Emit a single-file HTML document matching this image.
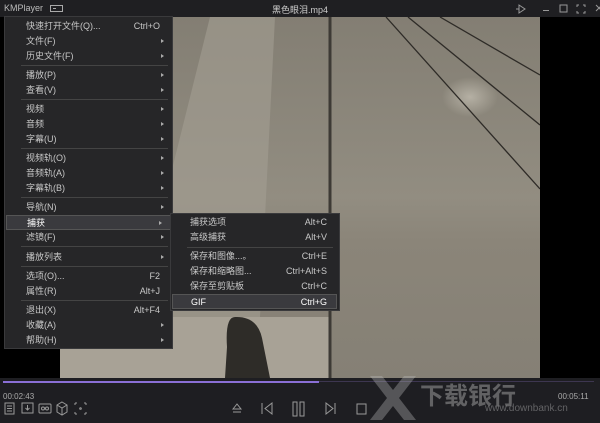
<!DOCTYPE html>
<html><head><meta charset="utf-8"><style>
*{margin:0;padding:0;box-sizing:border-box}
body{width:600px;height:423px;background:#000;position:relative;overflow:hidden;font-family:"Liberation Sans","Noto Sans CJK SC",sans-serif;font-size:9px;color:#c8c8c8}
.title{position:absolute;left:0;top:0;width:600px;height:17px;background:#1f1f22}
.bot{position:absolute;left:0;top:378px;width:600px;height:45px;background:#1e1e22}
.menu{position:absolute;background:#262628;border:1px solid #3a3a3c}
.it{position:absolute;left:0;right:0;height:15px;line-height:15px;padding-left:21px}
.it .k{position:absolute;right:12px;top:0}
.it .a{position:absolute;right:8px;top:5px;width:0;height:0;border-left:3px solid #aaa;border-top:2.5px solid transparent;border-bottom:2.5px solid transparent}
.sep{position:absolute;left:16px;right:4px;height:1px;background:#444}
.hl{background:#3a3a3e;border:1px solid #555;color:#fff}
</style></head><body>
<div class="title">
<div style="position:absolute;left:4px;top:3px;font-size:9px;color:#bbb">KMPlayer</div>
<div style="position:absolute;left:50px;top:5px;width:13px;height:7px;border:1px solid #aaa"><div style="position:absolute;left:2px;top:2px;width:3px;height:1px;background:#aaa"></div></div>
<div style="position:absolute;left:272px;top:3px;color:#ccc">黑色眼泪.mp4</div>
<svg style="position:absolute;left:510px;top:2px" width="90" height="14" stroke="#999" fill="none" stroke-width="1">
<path d="M6 7h3M9 3v8l6-4z"/><path d="M33 8.5h6"/><rect x="50" y="3" width="7" height="7"/><path d="M69 3h-2v2M73 3h2v2M69 11h-2v-2M73 11h2v-2"/><path d="M86 3l6 6M92 3l-6 6"/>
</svg>
</div>
<svg style="position:absolute;left:60px;top:17px" width="480" height="361">
<defs><linearGradient id="g" x1="0" y1="0" x2="0" y2="1"><stop offset="0" stop-color="#837e73"/><stop offset="0.5" stop-color="#928d81"/><stop offset="0.62" stop-color="#8b8579"/><stop offset="1" stop-color="#858075"/></linearGradient>
<radialGradient id="c"><stop offset="0" stop-color="#b5b0a4"/><stop offset="1" stop-color="#b5b0a4" stop-opacity="0"/></radialGradient></defs>
<rect width="480" height="361" fill="url(#g)"/>
<path d="M150 0h65l-15 300l-100 61h-40z" fill="#a39e92" opacity="0.6"/>
<rect x="0" y="300" width="270" height="61" fill="#a8a296"/>
<ellipse cx="410" cy="80" rx="28" ry="20" fill="url(#c)"/>
<rect x="268.5" y="0" width="3" height="361" fill="#3d3a35"/>
<path d="M326 0L480 172M348 0L480 108M380 0L480 58" stroke="#2e2b27" stroke-width="1.3"/>
<path d="M175 300 q-10 0 -8 30 l-2 31h45l-8-40q-5-22-27-21z" fill="#2e2c28"/>
</svg>
<div class="bot">
<div style="position:absolute;left:3px;top:3px;width:316px;height:2px;background:#8a6fd6"></div>
<div style="position:absolute;left:319px;top:3px;width:275px;height:1px;background:#3d3650"></div>
<div style="position:absolute;left:3px;top:14px;font-size:8px;color:#aaa">00:02:43</div>
<div style="position:absolute;left:558px;top:14px;font-size:8px;color:#aaa">00:05:11</div>
<svg style="position:absolute;left:0;top:20px" width="600" height="25" stroke="#999" fill="none" stroke-width="1">
<rect x="5" y="5" width="9" height="11"/><path d="M7 8h5M7 10.5h5M7 13h5"/>
<rect x="22" y="5" width="11" height="10"/><path d="M27.5 7v5M25.5 10l2 2 2-2"/>
<rect x="39" y="6" width="12" height="9" rx="1"/><circle cx="43" cy="10.5" r="1.5"/><circle cx="47" cy="10.5" r="1.5"/>
<path d="M62 4l5 3v7l-5 3-5-3v-7zM57 7l5 3 5-3M62 10v7"/>
<path d="M75 5h2M75 5v2M84 5h2M86 5v2M75 16h2M75 14v2M84 16h2M86 14v2"/><circle cx="80.5" cy="10.5" r="0.8"/>
<path d="M233 11l4-5 4 5zM233 14h8"/>
<path d="M262 5v11M272 5l-7 5.5 7 5.5z"/>
<rect x="293" y="4" width="4" height="14"/><rect x="300" y="4" width="4" height="14"/>
<path d="M326 5l7 5.5-7 5.5zM335 5v11"/>
<rect x="357" y="6" width="9" height="10"/>
</svg>
<div style="position:absolute;left:420px;top:-2px;font-size:24px;font-weight:bold;color:rgba(200,200,200,0.4)">下载银行</div>
<div style="position:absolute;left:485px;top:25px;font-size:10px;color:rgba(200,200,200,0.4)">www.downbank.cn</div>
<svg style="position:absolute;left:368px;top:-4px" width="50" height="47"><path d="M2 2h12l11 14 11-14h12l-17 22 17 22h-12l-11-14-11 14h-12l17-22z" fill="rgba(190,190,190,0.35)"/></svg>
</div>

<div class="menu" style="left:4px;top:16px;width:169px;height:333px">
<div class="it" style="top:2px">快速打开文件(Q)...<span class="k">Ctrl+O</span></div>
<div class="it" style="top:17px">文件(F)<span class="a"></span></div>
<div class="it" style="top:32px">历史文件(F)<span class="a"></span></div>
<div class="sep" style="top:48px"></div>
<div class="it" style="top:51px">播放(P)<span class="a"></span></div>
<div class="it" style="top:66px">查看(V)<span class="a"></span></div>
<div class="sep" style="top:82px"></div>
<div class="it" style="top:85px">视频<span class="a"></span></div>
<div class="it" style="top:100px">音频<span class="a"></span></div>
<div class="it" style="top:115px">字幕(U)<span class="a"></span></div>
<div class="sep" style="top:131px"></div>
<div class="it" style="top:134px">视频轨(O)<span class="a"></span></div>
<div class="it" style="top:149px">音频轨(A)<span class="a"></span></div>
<div class="it" style="top:164px">字幕轨(B)<span class="a"></span></div>
<div class="sep" style="top:180px"></div>
<div class="it" style="top:183px">导航(N)<span class="a"></span></div>
<div class="it hl" style="top:198px;left:1px;right:1px;padding-left:20px">捕获<span class="a"></span></div>
<div class="it" style="top:213px">滤镜(F)<span class="a"></span></div>
<div class="sep" style="top:229px"></div>
<div class="it" style="top:233px">播放列表<span class="a"></span></div>
<div class="sep" style="top:249px"></div>
<div class="it" style="top:252px">选项(O)...<span class="k">F2</span></div>
<div class="it" style="top:267px">属性(R)<span class="k">Alt+J</span></div>
<div class="sep" style="top:283px"></div>
<div class="it" style="top:286px">退出(X)<span class="k">Alt+F4</span></div>
<div class="it" style="top:301px">收藏(A)<span class="a"></span></div>
<div class="it" style="top:316px">帮助(H)<span class="a"></span></div>
</div>

<div class="menu" style="left:170px;top:213px;width:170px;height:98px">
<div class="it" style="top:1px;padding-left:19px">捕获选项<span class="k">Alt+C</span></div>
<div class="it" style="top:16px;padding-left:19px">高级捕获<span class="k">Alt+V</span></div>
<div class="sep" style="top:33px;left:16px;right:6px"></div>
<div class="it" style="top:35px;padding-left:19px">保存和图像...。<span class="k">Ctrl+E</span></div>
<div class="it" style="top:50px;padding-left:19px">保存和缩略图...<span class="k">Ctrl+Alt+S</span></div>
<div class="it" style="top:65px;padding-left:19px">保存至剪贴板<span class="k">Ctrl+C</span></div>
<div class="it hl" style="top:80px;left:1px;right:2px;padding-left:18px">GIF<span class="k" style="right:9px">Ctrl+G</span></div>
</div>
</body></html>
